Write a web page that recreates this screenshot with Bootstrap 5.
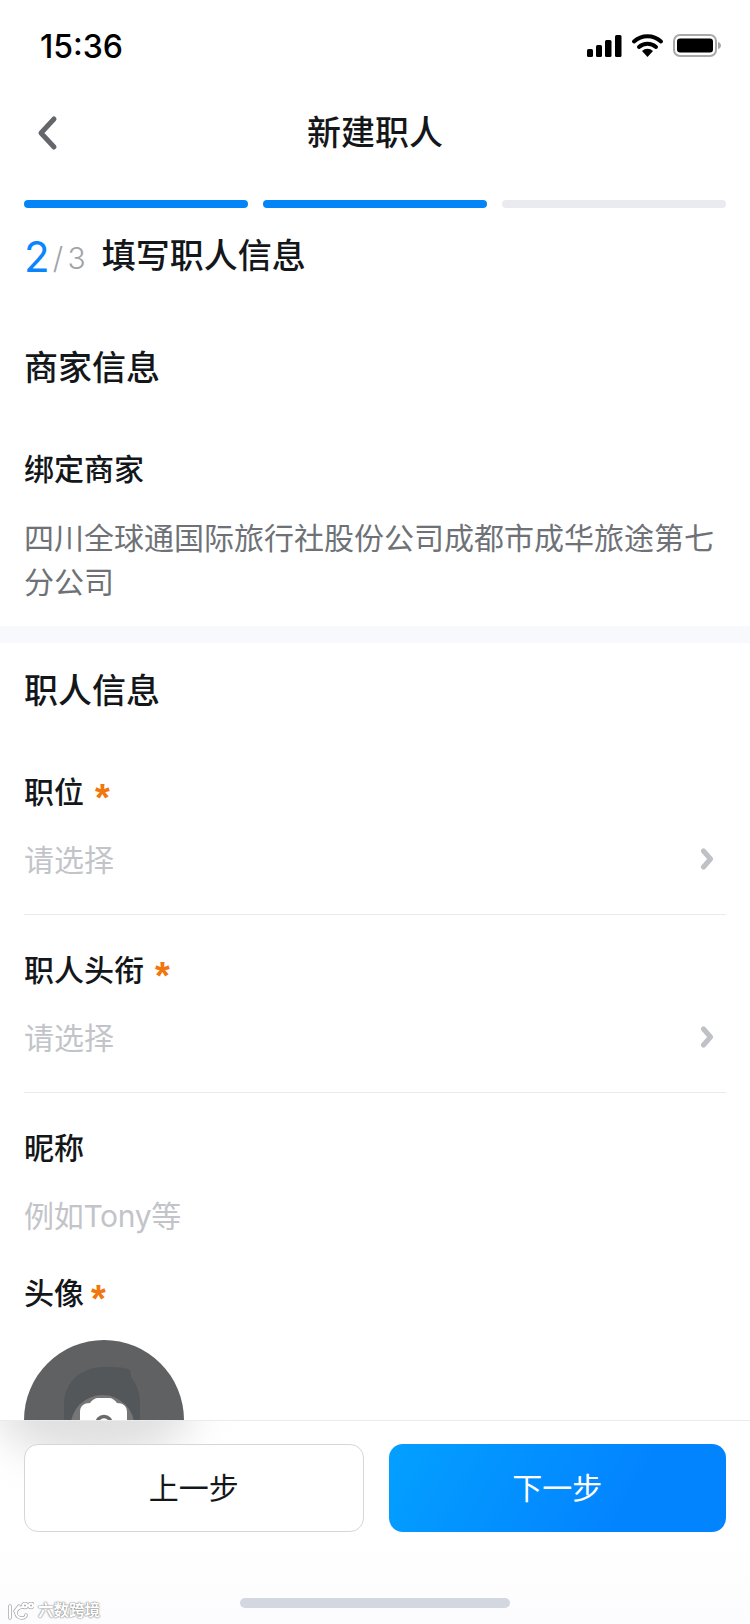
<!DOCTYPE html>
<html lang="zh-CN">
  <head>
    <meta charset="UTF-8" />
    <meta name="viewport" content="width=device-width, initial-scale=1.0" />
    <title>新建职人</title>
    <link
      href="https://cdn.jsdelivr.net/npm/bootstrap@5.3.3/dist/css/bootstrap.min.css"
      rel="stylesheet"
    />
    <style>
      body {
        font-family: "Liberation Sans", "Noto Sans CJK SC", sans-serif;
        color: #14171a;
        background: #fff;
      }
      .phone {
        position: relative;
        width: 750px;
        height: 1624px;
        overflow: hidden;
      }
      .status-bar {
        height: 94px;
        padding: 0 29px 0 40px;
      }
      .status-time {
        font-family: Inter, sans-serif;
        font-size: 32px;
        font-weight: 500;
        color: #000;
      }
      .status-icons {
        margin-bottom: 4px;
      }
      .nav-head {
        height: 78px;
        padding: 0 24px 0 35px;
      }
      .nav-title {
        font-size: 34px;
        font-weight: 500;
        line-height: 78px;
      }
      .step-bars {
        margin-top: 28px;
        padding: 0 24px;
        gap: 15.5px;
      }
      .step-bar {
        height: 8px;
        flex: 1 1 0;
        border-radius: 4px;
        background: #eaebf0;
      }
      .step-bar.is-on {
        background: #0385f7;
      }
      .step-head {
        padding: 0 24px;
        height: 60px;
        margin-top: 18px;
      }
      .step-now {
        font-family: Inter, sans-serif;
        font-size: 42px;
        color: #0a84ff;
      }
      .step-all {
        font-family: Inter, sans-serif;
        font-size: 30px;
        font-weight: 300;
        color: #a0a3a8;
        word-spacing: -4px;
        margin: 5px 16px 0 3px;
      }
      .step-name {
        font-size: 34px;
        font-weight: 500;
      }
      .block-title {
        font-size: 34px;
        font-weight: 500;
        line-height: 48px;
        padding: 0 24px;
      }
      .field-label {
        font-size: 30px;
        font-weight: 500;
        line-height: 44px;
      }
      .req {
        color: #f0760d;
        font-size: 38px;
        font-weight: 700;
        line-height: 30px;
        padding-top: 10px;
        margin-left: 11px;
      }
      .req-near {
        margin-left: 7px;
      }
      .field-value {
        font-size: 30px;
        line-height: 44px;
        color: #6e7277;
      }
      .field-hint {
        font-size: 30px;
        line-height: 44px;
        color: #c2c4c9;
      }
      .hint-latin {
        font-family: Inter, "Noto Sans CJK SC", sans-serif;
        letter-spacing: -0.3px;
      }
      .gap-band {
        height: 17px;
        background: #f7f9fc;
      }
      .field-row {
        margin: 0 24px;
      }
      .field-line {
        border-bottom: 1px solid #e9eaee;
      }
      .row-arrow {
        margin: 0 12px 4px 0;
      }
      .avatar-pick {
        width: 160px;
        height: 160px;
        border-radius: 50%;
        background: #5f6163;
        margin: 24px 0 0 24px;
        position: relative;
      }
      .foot-bar {
        position: absolute;
        left: 0;
        right: 0;
        bottom: 0;
        height: 204px;
        background: linear-gradient(#fff 60%, #fcfcfe);
        border-top: 1px solid #e9ebee;
        padding: 23px 24px 0;
        gap: 25px;
      }
      .foot-shade {
        position: absolute;
        left: -6px;
        top: -70px;
        width: 200px;
        height: 110px;
        border-radius: 50%;
        background: #e0e0e0;
        filter: blur(20px);
      }
      .foot-clip {
        position: absolute;
        inset: 0;
        overflow: hidden;
      }
      .btn-step {
        position: relative;
        flex: 1 1 0;
        height: 88px;
        border-radius: 14px;
        font-size: 30px;
        font-weight: 400;
      }
      .btn-prev {
        background: #fff;
        border: 1px solid #d3d6dc;
        color: #14171a;
      }
      .btn-next {
        background: linear-gradient(120deg, #03a0ff, #0384ff 70%);
        border: 0;
        color: #fff;
      }
      .home-bar {
        position: absolute;
        left: 240px;
        bottom: 16px;
        width: 270px;
        height: 10px;
        border-radius: 5px;
        background: #d2d7e0;
      }
      .mark-wrap {
        position: absolute;
        left: 7px;
        bottom: 4px;
        gap: 4px;
      }
      .mark-text {
        font-size: 15.5px;
        line-height: 18px;
        font-weight: 700;
        color: #fff;
        text-shadow: 0 0 2px #777, 0 0 1px #777;
      }
    </style>
  </head>
  <body>
    <div class="phone">
      <div class="status-bar d-flex justify-content-between align-items-center">
        <span class="status-time">15:36</span>
        <svg class="status-icons" width="134" height="25" viewBox="0 0 134 25">
          <rect x="0" y="16" width="6" height="8" rx="1.5" />
          <rect x="9" y="12" width="6" height="12" rx="1.5" />
          <rect x="18" y="7" width="6.5" height="17" rx="1.5" />
          <rect x="28" y="2" width="6.5" height="22" rx="1.5" />
          <path d="M47 8.5a20 20 0 0 1 27 0M52 14a13 13 0 0 1 17 0" fill="none" stroke="#000" stroke-width="4" stroke-linecap="round" />
          <path d="M55 18a8 8 0 0 1 11 0l-5.500 6z" />
          <rect x="87" y="2" width="42" height="21" rx="6" fill="none" stroke="#a9a9a9" stroke-width="2" />
          <rect x="90" y="5.500" width="36" height="14" rx="3" />
          <path d="M131 9c2 .5 3 2 3 3.500s-1 3-3 3.500z" fill="#a9a9a9" />
        </svg>
      </div>

      <div class="nav-head d-flex align-items-center position-relative">
        <svg width="24" height="36" viewBox="0 0 24 36">
          <path d="M19 4L6 18l13 14" fill="none" stroke="#63666b" stroke-width="5" stroke-linecap="round" stroke-linejoin="round" />
        </svg>
        <div class="nav-title position-absolute top-0 start-50 translate-middle-x">新建职人</div>
      </div>

      <div class="step-bars d-flex">
        <div class="step-bar is-on"></div>
        <div class="step-bar is-on"></div>
        <div class="step-bar"></div>
      </div>
      <div class="step-head d-flex align-items-center">
        <span class="step-now">2</span>
        <span class="step-all">/ 3</span>
        <span class="step-name">填写职人信息</span>
      </div>

      <div class="block-title" style="margin-top: 58px">商家信息</div>
      <div class="field-row" style="margin-top: 56px">
        <div class="field-label">绑定商家</div>
        <div class="field-value" style="margin-top: 25px">四川全球通国际旅行社股份公司成都市成华旅途第七分公司</div>
      </div>
      <div class="gap-band" style="margin-top: 21px"></div>

      <div class="block-title" style="margin-top: 24px">职人信息</div>

      <div class="field-row field-line" style="margin-top: 56px; height: 144px">
        <div class="field-label d-flex align-items-center">职位<span class="req">*</span></div>
        <div class="d-flex justify-content-between align-items-center" style="margin-top: 24px">
          <span class="field-hint">请选择</span>
          <svg class="row-arrow" width="14" height="22" viewBox="0 0 14 22"><path d="M3.500 3l7 8-7 8" fill="none" stroke="#bfc1c6" stroke-width="5" stroke-linecap="round" stroke-linejoin="round" /></svg>
        </div>
      </div>
      <div class="field-row field-line" style="margin-top: 34px; height: 144px">
        <div class="field-label d-flex align-items-center">职人头衔<span class="req">*</span></div>
        <div class="d-flex justify-content-between align-items-center" style="margin-top: 24px">
          <span class="field-hint">请选择</span>
          <svg class="row-arrow" width="14" height="22" viewBox="0 0 14 22"><path d="M3.500 3l7 8-7 8" fill="none" stroke="#bfc1c6" stroke-width="5" stroke-linecap="round" stroke-linejoin="round" /></svg>
        </div>
      </div>
      <div class="field-row" style="margin-top: 34px">
        <div class="field-label">昵称</div>
        <div class="field-hint hint-latin" style="margin-top: 23px">例如Tony等</div>
      </div>
      <div class="field-row" style="margin-top: 34px">
        <div class="field-label d-flex align-items-center">头像<span class="req req-near">*</span></div>
      </div>
      <div class="avatar-pick">
        <svg class="position-absolute top-0 start-0" width="160" height="160" viewBox="0 0 160 160">
          <path d="M40 64c0-22 18-37 39-37 9 0 17 0 25 2 2 0 3 3 3 8 6 7 9 17 9 27v50H40z" fill="#54575a" />
          <circle cx="78.500" cy="87" r="32" fill="#767676" />
          <path d="M56 72c0-6 4-9 10-9 2-3 5-5 8-5h11c3 0 6 2 8 5 6 0 10 3 10 9v30H56z" fill="#fff" />
          <circle cx="80" cy="84" r="7.500" fill="none" stroke="#6a6a6a" stroke-width="3.500" />
        </svg>
      </div>

      <div class="foot-bar d-flex align-items-start">
        <div class="foot-clip"><div class="foot-shade"></div></div>
        <button type="button" class="btn btn-step btn-prev">上一步</button>
        <button type="button" class="btn btn-step btn-next">下一步</button>
      </div>

      <div class="home-bar"></div>
      <div class="mark-wrap d-flex align-items-center">
        <svg width="27" height="18" viewBox="0 0 27 18">
          <g fill="none" stroke="#a8a8a8" stroke-width="3.500" stroke-linecap="round">
            <path d="M3 4v12M8 9l4-5M16 5c-4 0-7 3-7 6s3 5 6 5 4-2 4-3" />
            <circle cx="18" cy="3.500" r="2" />
            <circle cx="24" cy="3.500" r="2" />
          </g>
          <g fill="none" stroke="#fff" stroke-width="2" stroke-linecap="round">
            <path d="M3 4v12M8 9l4-5M16 5c-4 0-7 3-7 6s3 5 6 5 4-2 4-3" />
            <circle cx="18" cy="3.500" r="2" />
            <circle cx="24" cy="3.500" r="2" />
          </g>
        </svg>
        <span class="mark-text">六数跨境</span>
      </div>
    </div>
    <script src="https://cdn.jsdelivr.net/npm/bootstrap@5.3.3/dist/js/bootstrap.bundle.min.js"></script>
  </body>
</html>
